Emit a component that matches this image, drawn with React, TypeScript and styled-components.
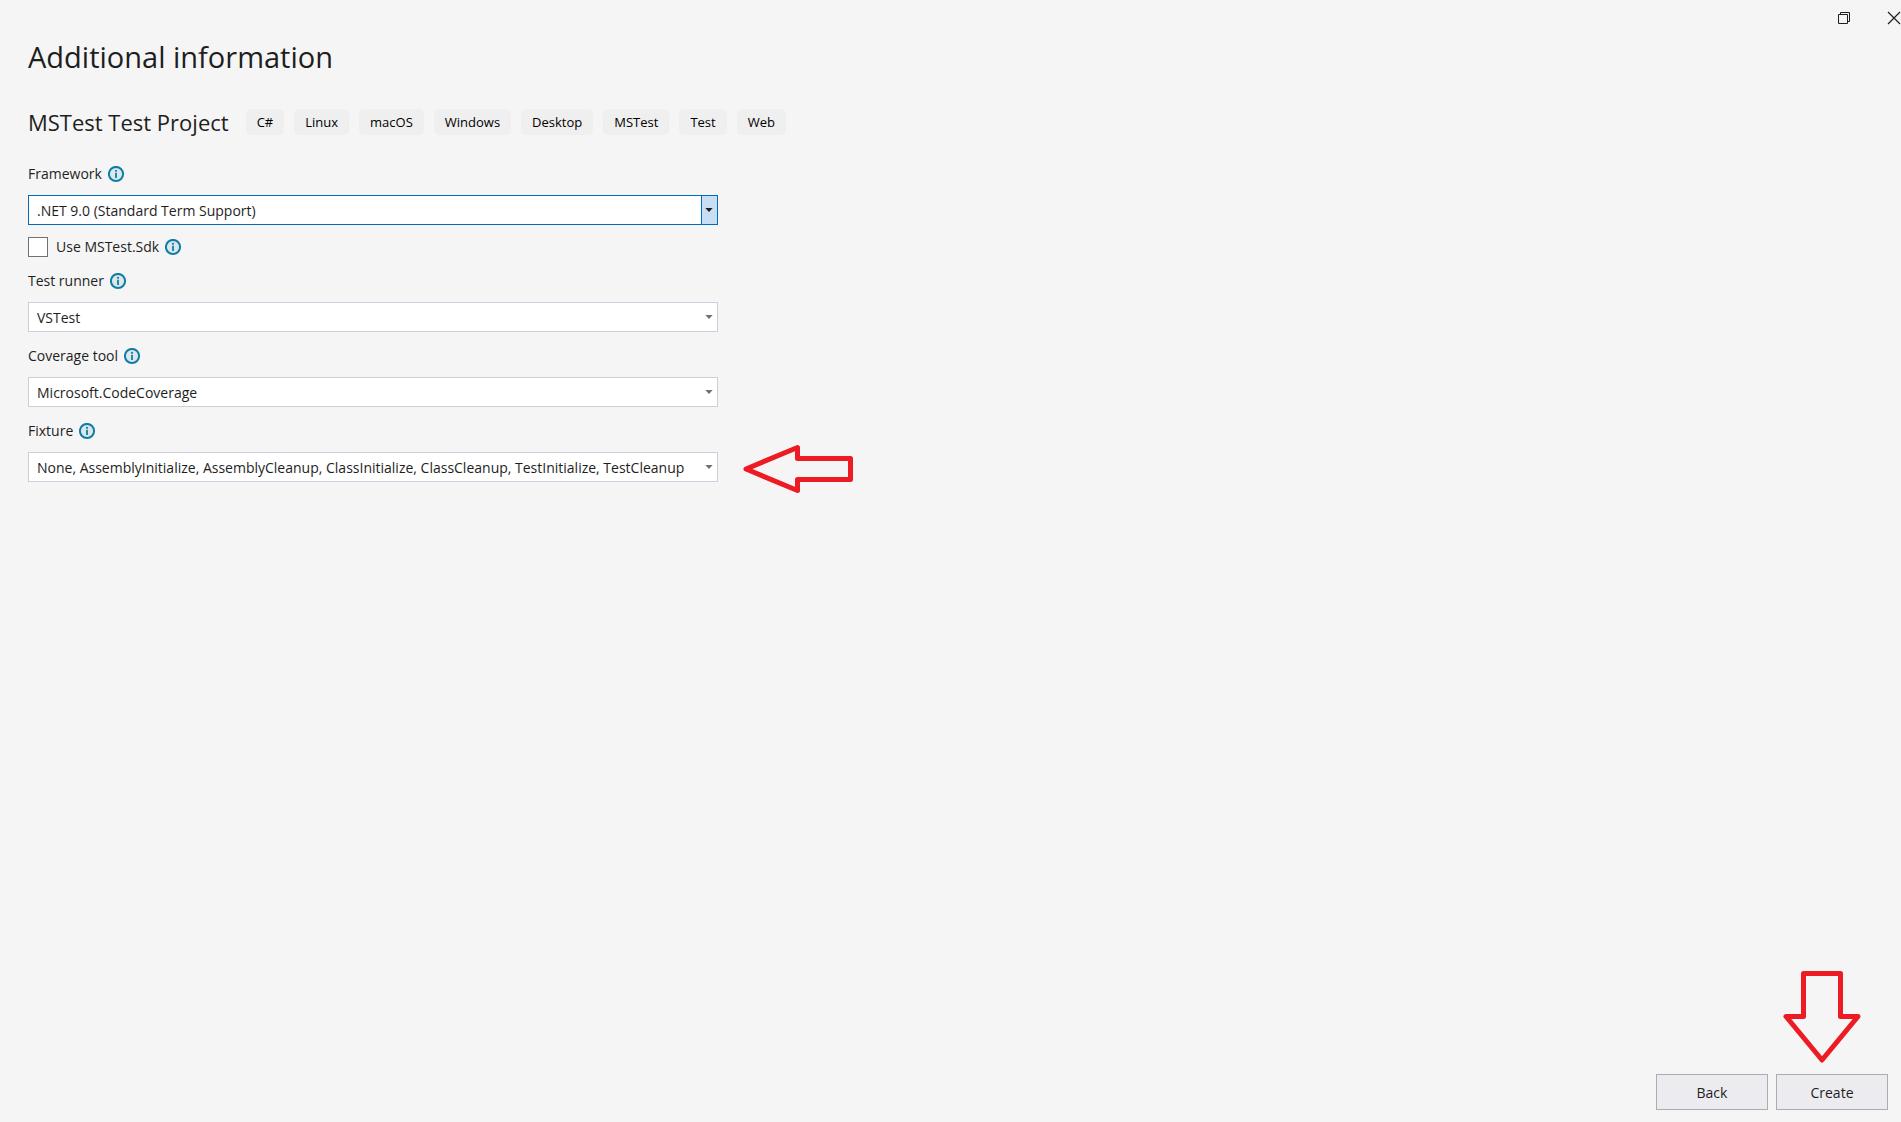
import React, { useState } from "react";
import styled, { createGlobalStyle, css } from "styled-components";

const GlobalStyle = createGlobalStyle`
  *, *::before, *::after { box-sizing: border-box; }
  body {
    margin: 0;
    background: #f5f5f5;
    color: #1e1e1e;
    font-family: "Segoe UI", "Open Sans", "Noto Sans", sans-serif;
    font-size: 14px;
    line-height: 20px;
  }
  button, select, input { font: inherit; color: inherit; }
`;

const Page = styled.div`
  display: flex;
  flex-direction: column;
  min-height: 100vh;
`;

const WindowBar = styled.header`
  display: flex;
  justify-content: flex-end;
  gap: 36px;
  height: 36px;
  padding-top: 11px;
`;

const WindowButton = styled.button`
  display: flex;
  width: 14px;
  height: 14px;
  padding: 0;
  border: 0;
  background: none;
`;

const Main = styled.main`
  flex: 1;
  padding: 0 28px;
`;

const Title = styled.h1`
  margin: 0 0 28px;
  font-size: 29px;
  line-height: 42px;
  font-weight: 400;
`;

const ProjectRow = styled.div`
  display: flex;
  flex-wrap: wrap;
  align-items: center;
  gap: 17px;
  min-height: 32px;
  margin-bottom: 12px;
`;

const ProjectName = styled.h2`
  margin: 0;
  font-size: 22px;
  line-height: 32px;
  font-weight: 400;
`;

const Tags = styled.ul`
  display: flex;
  flex-wrap: wrap;
  gap: 10px;
  margin: 0;
  padding: 0;
  list-style: none;
`;

const Tag = styled.li`
  padding: 3px 11px;
  border-radius: 5px;
  background: #efefef;
  color: #000;
  font-size: 13px;
  line-height: 20px;
`;

const Form = styled.form`
  display: flex;
  flex-direction: column;
  max-width: 690px;
`;

const LabelRow = styled.div`
  display: flex;
  align-items: center;
  gap: 6px;
  height: 45px;
  padding-top: 10px;
  padding-bottom: 7px;
`;

const CheckRow = styled.div`
  display: flex;
  align-items: center;
  gap: 6px;
  height: 20px;
  margin: 12px 0 0;
`;

const CheckBox = styled.input`
  appearance: none;
  width: 20px;
  height: 20px;
  margin: 0 2px 0 0;
  border: 1px solid #717171;
  background: #fff;
  &:checked { background: #0e6fb8; }
`;

const SelectBox = styled.div`
  position: relative;
`;

const Select = styled.select<{ $active?: boolean }>`
  display: block;
  appearance: none;
  width: 100%;
  height: 30px;
  padding: 2px 24px 0 8px;
  border: 1px solid ${(p) => (p.$active ? "#006cbe" : "#cccedb")};
  border-radius: 0;
  outline: 0;
  background: #fff;
`;

const DropMark = styled.span<{ $active?: boolean }>`
  position: absolute;
  top: 1px;
  right: 1px;
  bottom: 1px;
  display: flex;
  align-items: center;
  justify-content: center;
  width: 16px;
  padding-right: 1px;
  color: #717171;
  pointer-events: none;
  ${(p) =>
    p.$active &&
    css`
      border-left: 1px solid #006cbe;
      background: #c9def5;
      color: #1e1e1e;
    `}
`;

const Info = styled.svg`
  flex: none;
  width: 17px;
  height: 17px;
`;

const SideArrow = styled.svg`
  position: absolute;
  left: calc(100% + 24px);
  top: -8px;
`;

const Footer = styled.footer`
  display: flex;
  justify-content: flex-end;
  gap: 8px;
  padding: 0 13px 12px;
`;

const ButtonSlot = styled.div`
  position: relative;
`;

const Button = styled.button`
  width: 112px;
  height: 36px;
  padding: 2px 0 0;
  border: 1px solid #acacac;
  background: #ececf0;
`;

const DownArrow = styled.svg`
  position: absolute;
  left: 6px;
  bottom: calc(100% + 10px);
`;

const tags = ["C#", "Linux", "macOS", "Windows", "Desktop", "MSTest", "Test", "Web"];

function InfoIcon() {
  return (
    <Info viewBox="0 0 17 17" aria-hidden="true">
      <circle cx="8" cy="8" r="7.1" fill="#dbe7eb" stroke="#0f7ea5" strokeWidth="2" />
      <path d="M8 6.8V12" stroke="#0f7ea5" strokeWidth="1.8" />
      <circle cx="8" cy="4.8" r="1.1" fill="#0f7ea5" />
    </Info>
  );
}

type FieldProps = {
  id: string;
  label: string;
  value: string;
  active?: boolean;
  children?: React.ReactNode;
};

function Field({ id, label, value, active, children }: FieldProps) {
  return (
    <div>
      <LabelRow>
        <label htmlFor={id}>{label}</label>
        <InfoIcon />
      </LabelRow>
      <SelectBox>
        <Select id={id} $active={active}>
          <option>{value}</option>
        </Select>
        <DropMark $active={active}>
          <svg width="8" height="4" viewBox="0 0 8 4" aria-hidden="true">
            <path d="M0.3 0H7.7L4 4Z" fill="currentColor" />
          </svg>
        </DropMark>
        {children}
      </SelectBox>
    </div>
  );
}

export default function App() {
  const [sdk, setSdk] = useState(false);
  return (
    <Page>
      <GlobalStyle />
      <WindowBar>
        <WindowButton aria-label="Restore">
          <svg width="14" height="14" viewBox="0 0 14 14" fill="none" stroke="#1e1e1e">
            <path d="M3.5 3.5V1.5H12.5V10.5H10.5" />
            <path d="M1.5 3.5H10.5V12.5H1.5Z" />
          </svg>
        </WindowButton>
        <WindowButton aria-label="Close">
          <svg width="14" height="14" viewBox="0 0 14 14" fill="none" stroke="#1e1e1e">
            <path d="M1 1L13 13M13 1L1 13" strokeWidth="1.2" />
          </svg>
        </WindowButton>
      </WindowBar>
      <Main>
        <Title>Additional information</Title>
        <ProjectRow>
          <ProjectName>MSTest Test Project</ProjectName>
          <Tags>
            {tags.map((t) => (
              <Tag key={t}>{t}</Tag>
            ))}
          </Tags>
        </ProjectRow>
        <Form>
          <Field id="framework" label="Framework" value=".NET 9.0 (Standard Term Support)" active />
          <CheckRow>
            <CheckBox id="sdk" type="checkbox" checked={sdk} onChange={(e) => setSdk(e.target.checked)} />
            <label htmlFor="sdk">Use MSTest.Sdk</label>
            <InfoIcon />
          </CheckRow>
          <Field id="runner" label="Test runner" value="VSTest" />
          <Field id="coverage" label="Coverage tool" value="Microsoft.CodeCoverage" />
          <Field
            id="fixture"
            label="Fixture"
            value="None, AssemblyInitialize, AssemblyCleanup, ClassInitialize, ClassCleanup, TestInitialize, TestCleanup"
          >
            <SideArrow width="112" height="50" viewBox="0 0 112 50" fill="none" aria-hidden="true">
              <path d="M4 25L55.5 3.5V14.5H108.5V35.5H55.5V46.5Z" stroke="#ed1c24" strokeWidth="5" strokeLinejoin="round" />
            </SideArrow>
          </Field>
        </Form>
      </Main>
      <Footer>
        <Button type="button">Back</Button>
        <ButtonSlot>
          <DownArrow width="80" height="94" viewBox="0 0 80 94" fill="none" aria-hidden="true">
            <path d="M21.5 3.5H58.5V46.5H76L40 90L4 46.5H21.5Z" stroke="#ed1c24" strokeWidth="5" strokeLinejoin="round" />
          </DownArrow>
          <Button type="button">Create</Button>
        </ButtonSlot>
      </Footer>
    </Page>
  );
}
